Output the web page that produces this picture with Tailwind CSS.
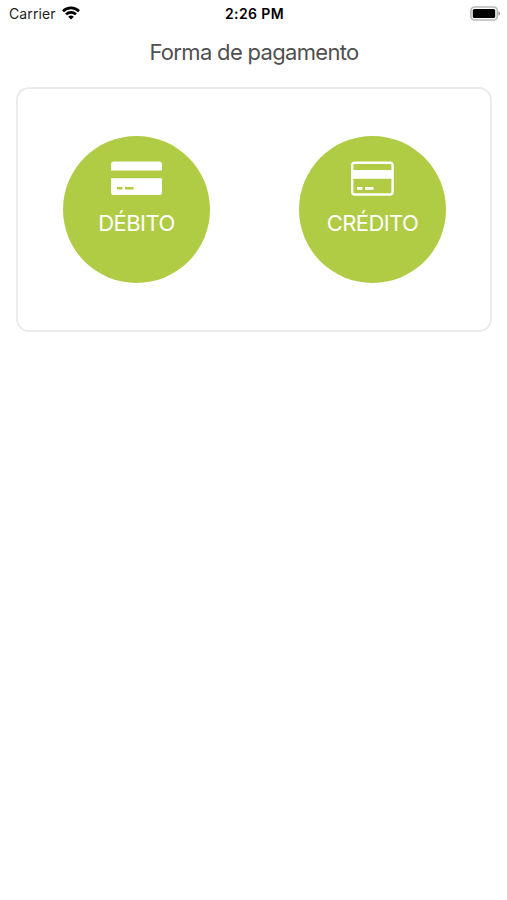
<!DOCTYPE html>
<html lang="pt-BR">
<head>
  <title>Forma de pagamento</title>
  <meta charset="UTF-8">
  <meta name="viewport" content="width=device-width, initial-scale=1.0">
  <script src="https://cdn.jsdelivr.net/npm/@tailwindcss/browser@4"></script>
</head>
<body class="bg-white min-h-screen font-['Inter',sans-serif]">
  <!-- Status bar -->
  <header class="grid grid-cols-3 items-center h-[27px] pl-[9px] pr-[7px] text-black">
    <div class="flex items-center gap-[6px]">
      <span class="text-[14px] leading-[27px] tracking-[0.1px] text-[#222]">Carrier</span>
      <svg class="w-[18px] h-[14px] -mt-px" viewBox="0 0 18 14" fill="none" stroke="#000" stroke-width="2.7">
        <path d="M1 5.2a11.5 11.5 0 0 1 16 0"/>
        <path d="M4 8.4a7.2 7.2 0 0 1 10 0"/>
        <path d="M9 13.6L6.2 10.8a4 4 0 0 1 5.6 0z" fill="#000" stroke="none"/>
      </svg>
    </div>
    <p class="text-center text-[14px] leading-[27px] font-semibold tracking-[0.4px]">2:26 PM</p>
    <svg class="justify-self-end w-[30px] h-[15px] -mt-px" viewBox="0 0 30 15">
      <rect x="0.9" y="1" width="26.4" height="13" rx="3.8" fill="#fff" stroke="#b8b8b8" stroke-width="1.6"/>
      <rect x="2.8" y="3" width="22.4" height="9" rx="1.6" fill="#000"/>
      <path d="M28.4 5.2c2.2.9 2.2 3.7 0 4.6z" fill="#999"/>
    </svg>
  </header>

  <main class="pl-4 pr-[15px]">
    <h1 class="h-[60px] pt-[10px] text-center text-[22px] leading-[30px] tracking-[-0.68px] text-[#505050]">Forma de pagamento</h1>

    <section class="flex justify-between h-[245px] pt-[47px] pl-[45px] pr-[44px] border-2 border-[#ebebeb] rounded-[13px]">
      <button type="button" class="flex flex-col items-center size-[147px] pt-[25px] rounded-full bg-[#b0cc45] text-white">
        <svg class="w-[51px] h-[34px] mr-px" viewBox="0 0 51 34" fill="#fff">
          <path d="M3 .5h45a3 3 0 0 1 3 3v6H0v-6a3 3 0 0 1 3-3z"/>
          <path fill-rule="evenodd" d="M0 17.3h51v14a3 3 0 0 1-3 3H3a3 3 0 0 1-3-3zM6 26v2.5h5.5V26zM14 26v2.5h8.5V26z"/>
        </svg>
        <span class="mt-[13px] text-[22px] leading-[30px] tracking-[-0.55px]">DÉBITO</span>
      </button>
      <button type="button" class="flex flex-col items-center size-[147px] pt-[25px] rounded-full bg-[#b0cc45] text-white">
        <svg class="w-[43px] h-[35px]" viewBox="0 0 43 35">
          <rect x="1.2" y="1.7" width="40.4" height="31.8" rx="2.6" fill="none" stroke="#fff" stroke-width="2.4"/>
          <path d="M1 9h41v8.8H1zM6 26h5.5v2.7H6zM14 26h8.5v2.7H14z" fill="#fff"/>
        </svg>
        <span class="mt-[12px] text-[22px] leading-[30px] tracking-[-0.6px]">CRÉDITO</span>
      </button>
    </section>
  </main>
</body>
</html>
